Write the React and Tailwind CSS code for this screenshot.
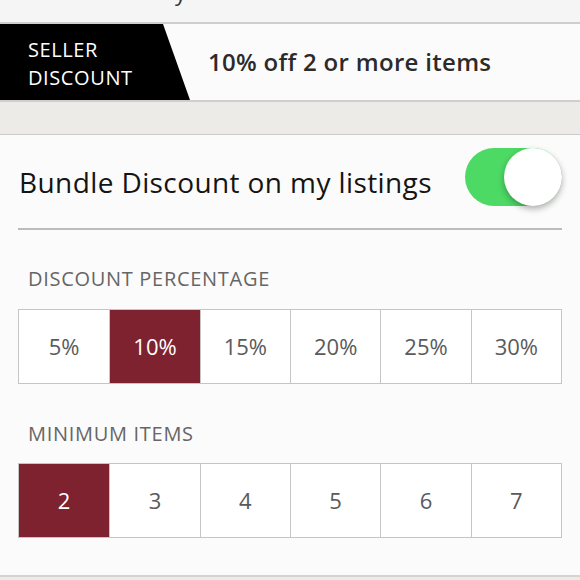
const percentages = ['5%', '10%', '15%', '20%', '25%', '30%'];
const minItems = ['2', '3', '4', '5', '6', '7'];

const OptionRow = ({ options, selected }) => (
    <div className="mx-[18px] grid grid-cols-6 border border-[#c6c4c4] bg-white">
        {options.map((opt, i) => (
            <div
                key={opt}
                className={`flex h-[73px] items-center justify-center text-[22px] ${i > 0 ? 'border-l border-[#c6c4c4]' : ''} ${opt === selected ? 'bg-[#7e2230] text-white' : 'text-[#5a5a5a]'}`}
            >
                {opt}
            </div>
        ))}
    </div>
);

export default function App() {
    return (
        <div className="h-[580px] w-[580px] overflow-hidden bg-[#ecebe8] font-['Open_Sans',sans-serif]">
            {/* header remains */}
            <div className="relative h-[24px] overflow-hidden border-b-2 border-[#cfcdcd] bg-[#f6f5f5]">
                <span className="absolute -top-[24px] left-[175px] text-[22px] text-[#333]">y</span>
            </div>

            {/* seller discount banner */}
            <div className="flex h-[78px] items-center border-b-2 border-[#cfcdcd] bg-[#fcfbfb]">
                <div className="flex h-full w-[190px] items-center bg-black pl-[28px] pt-[3px] text-[20px] leading-[28px] tracking-[0.6px] text-white [clip-path:polygon(0_0,163px_0,190px_100%,0_100%)]">
                    <span>SELLER<br />DISCOUNT</span>
                </div>
                <span className="ml-[18px] text-[24px] font-semibold tracking-[0.3px] text-[#2b2b2b]">10% off 2 or more items</span>
            </div>

            <div className="h-[33px] border-b border-[#cdcbc8]" />

            {/* settings card */}
            <div className="h-[442px] border-b-2 border-[#d6d4d2] bg-[#fcfbfb]">
                <div className="mx-[18px] flex h-[95px] items-center justify-between border-b-2 border-[#bdbcbc]">
                    <span className="pl-px text-[28px] tracking-[0.4px] text-[#141414]">Bundle Discount on my listings</span>
                    <div className="relative mb-[10px] h-[58px] w-[97px] rounded-full bg-[#4cd964]">
                        <div className="absolute right-0 top-0 h-[58px] w-[58px] rounded-full bg-white shadow-[0_3px_6px_rgba(0,0,0,0.3)]" />
                    </div>
                </div>

                <div className="flex h-[79px] items-center pl-[28px] pt-[19px] text-[20px] tracking-[0.7px] text-[#666]">DISCOUNT PERCENTAGE</div>
                <OptionRow options={percentages} selected="10%" />

                <div className="flex h-[79px] items-center pl-[28px] pt-[21px] text-[20px] tracking-[0.7px] text-[#666]">MINIMUM ITEMS</div>
                <OptionRow options={minItems} selected="2" />
            </div>
        </div>
    );
}
